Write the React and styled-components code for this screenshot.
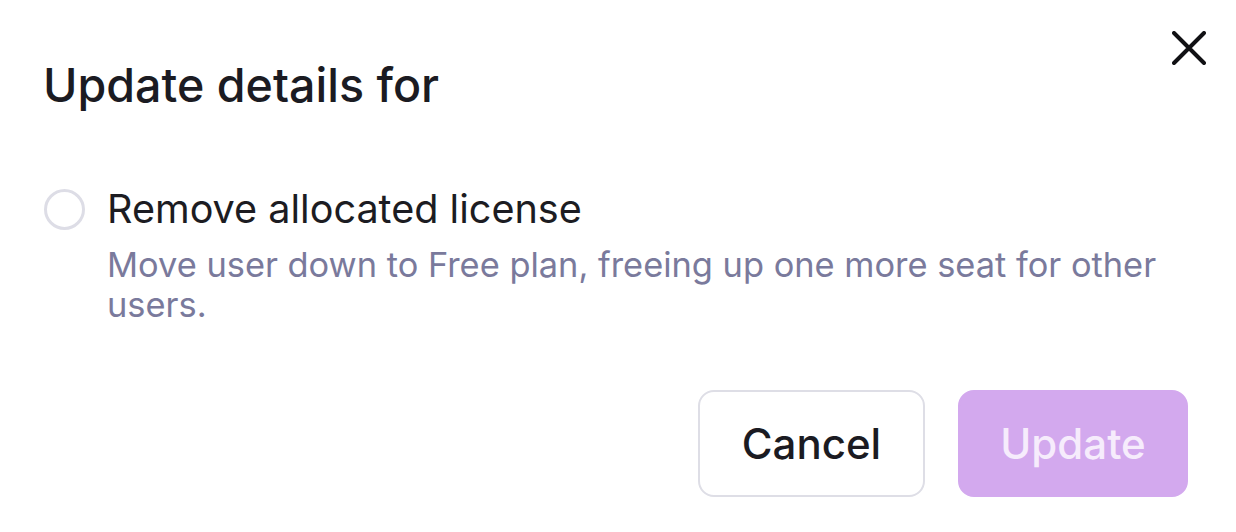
import React, { useState } from 'react'
import styled, { createGlobalStyle } from 'styled-components'

const GlobalStyle = createGlobalStyle`
  html, body {
    margin: 0;
    padding: 0;
    background: #ffffff;
  }
  body {
    font-family: Inter, "Noto Sans", "Liberation Sans", sans-serif;
    -webkit-font-smoothing: antialiased;
  }
`

const Dialog = styled.div`
  position: relative;
  box-sizing: border-box;
  width: 1236px;
  height: 532px;
  padding: 56px 48px 0 43px;
  background: #ffffff;
`

const Title = styled.h2`
  margin: 0;
  font-size: 46.6px;
  line-height: 58px;
  font-weight: 500;
  color: #1b1b22;
`

const CloseButton = styled.button`
  position: absolute;
  top: 31px;
  right: 30px;
  width: 34px;
  height: 34px;
  padding: 0;
  border: none;
  background: transparent;
  cursor: pointer;
  display: flex;
`

const Option = styled.label`
  display: flex;
  align-items: flex-start;
  gap: 22px;
  margin-top: 72px;
  padding-left: 1px;
  cursor: pointer;
`

const Radio = styled.span`
  flex: none;
  box-sizing: border-box;
  width: 41px;
  height: 41px;
  margin-top: 3px;
  border-radius: 50%;
  border: 3px solid ${p => (p.$checked ? '#a855f7' : '#dddde6')};
  background: #ffffff;
`

const OptionText = styled.div`
  display: flex;
  flex-direction: column;
  gap: 13px;
`

const OptionLabel = styled.span`
  font-size: 39.6px;
  line-height: 46px;
  font-weight: 400;
  color: #1c1c22;
`

const OptionHint = styled.span`
  font-size: 34.4px;
  line-height: 40px;
  color: #7a7a9c;
`

const Actions = styled.div`
  display: flex;
  justify-content: flex-end;
  gap: 33px;
  margin-top: 65px;
`

const Button = styled.button`
  box-sizing: border-box;
  width: ${p => p.$width}px;
  height: 107px;
  border-radius: 16px;
  font-family: inherit;
  font-size: 42px;
  font-weight: 500;
  border: 2px solid ${p => (p.$primary ? '#d3a9ee' : '#dedee6')};
  background: ${p => (p.$primary ? '#d3a9ee' : '#ffffff')};
  color: ${p => (p.$primary ? '#f6ecfc' : '#1b1b22')};
  cursor: pointer;
`

const App = () => {
  const [checked, setChecked] = useState(false)

  return (
    <>
      <GlobalStyle />
      <Dialog>
        <Title>Update details for </Title>
        <CloseButton aria-label="Close">
          <svg width="34" height="34" viewBox="0 0 34 34" fill="none">
            <path d="M2 2L32 32M32 2L2 32" stroke="#111114" strokeWidth="4" strokeLinecap="round" />
          </svg>
        </CloseButton>
        <Option onClick={() => setChecked(!checked)}>
          <Radio $checked={checked} />
          <OptionText>
            <OptionLabel>Remove allocated license</OptionLabel>
            <OptionHint>Move user down to Free plan, freeing up one more seat for other users.</OptionHint>
          </OptionText>
        </Option>
        <Actions>
          <Button $width={227}>Cancel</Button>
          <Button $width={230} $primary disabled={!checked}>Update</Button>
        </Actions>
      </Dialog>
    </>
  )
}

export default App
